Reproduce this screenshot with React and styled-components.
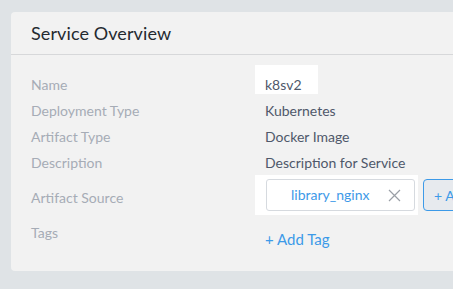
import React from "react";
import styled, { createGlobalStyle } from "styled-components";

const GlobalStyle = createGlobalStyle`
    html, body {
        margin: 0;
        padding: 0;
        background: #dfe3e6;
        overflow: hidden;
        font-family: "Lato", "Open Sans", sans-serif;
    }
`;

const Page = styled.div`
    width: 453px;
    height: 289px;
    padding: 12px 0 0 11px;
    box-sizing: border-box;
    overflow: hidden;
`;

const Card = styled.div`
    width: 620px;
    height: 259px;
    background: #f2f2f2;
    border-radius: 4px;
    box-sizing: border-box;
`;

const Header = styled.div`
    height: 43px;
    padding: 10px 20px 0;
    box-sizing: border-box;
    border-bottom: 1px solid #d7d8da;
    font-size: 18px;
    line-height: 22px;
    color: #242a30;
    letter-spacing: 0.1px;
`;

const Body = styled.div`
    padding: 10px 20px 0;
`;

const Row = styled.div`
    display: grid;
    grid-template-columns: 224px auto;
    align-items: start;
    height: ${p => p.h}px;
    margin-top: ${p => p.mt || 0}px;
`;

const Label = styled.div`
    padding-top: ${p => p.pt}px;
    font-size: 14px;
    line-height: 18px;
    color: #a6acb6;
`;

const Value = styled.div`
    justify-self: start;
    padding: ${p => p.pt}px 16px 0 10px;
    height: 100%;
    box-sizing: border-box;
    font-size: 14px;
    line-height: 18px;
    color: #4f586a;
    background: ${p => (p.active ? "#ffffff" : "transparent")};
`;

const SourceCell = styled.div`
    display: flex;
    align-items: flex-start;
    gap: 5px;
`;

const SourceWrap = styled.div`
    background: #ffffff;
    padding: 4px 3px 4px 11px;
`;

const SourceInput = styled.div`
    width: 149px;
    height: 32px;
    box-sizing: border-box;
    border: 1px solid #d6dadf;
    border-radius: 3px;
    display: flex;
    align-items: center;
    padding: 0 13px 0 24px;
    font-size: 14px;
    color: #3d9ae8;
`;

const SourceName = styled.span`
    flex: 1;
    margin-top: -1px;
`;

const AddButton = styled.div`
    margin-top: 4px;
    height: 32px;
    box-sizing: border-box;
    padding: 0 12px 0 10px;
    border: 1px solid #3d9ae8;
    border-radius: 4px;
    background: #e7eaee;
    display: flex;
    align-items: center;
    font-size: 14px;
    color: #3d9ae8;
    white-space: nowrap;
`;

const TagLink = styled.div`
    padding: 16px 0 0 10px;
    font-size: 15px;
    line-height: 17px;
    color: #3d9ae8;
`;

const CloseIcon = () => (
    <svg width="13" height="13" viewBox="0 0 13 13">
        <path d="M1 1 L12 12 M12 1 L1 12" stroke="#9a9fa6" strokeWidth="1.2" fill="none" />
    </svg>
);

const details = [
    { label: "Deployment Type", value: "Kubernetes" },
    { label: "Artifact Type", value: "Docker Image" },
    { label: "Description", value: "Description for Service" },
];

const App = () => {
    return (
        <Page>
            <GlobalStyle />
            <Card>
                <Header>Service Overview</Header>
                <Body>
                    <Row h={27}>
                        <Label pt={11}>Name</Label>
                        <Value pt={11} active>k8sv2</Value>
                    </Row>
                    {details.map(item => (
                        <Row h={26} key={item.label}>
                            <Label pt={10}>{item.label}</Label>
                            <Value pt={10}>{item.value}</Value>
                        </Row>
                    ))}
                    <Row h={40} mt={5}>
                        <Label pt={14}>Artifact Source</Label>
                        <SourceCell>
                            <SourceWrap>
                                <SourceInput>
                                    <SourceName>library_nginx</SourceName>
                                    <CloseIcon />
                                </SourceInput>
                            </SourceWrap>
                            <AddButton>+ Add Artifact Source</AddButton>
                        </SourceCell>
                    </Row>
                    <Row h={40}>
                        <Label pt={9}>Tags</Label>
                        <TagLink>+ Add Tag</TagLink>
                    </Row>
                </Body>
            </Card>
        </Page>
    );
};

export default App;
